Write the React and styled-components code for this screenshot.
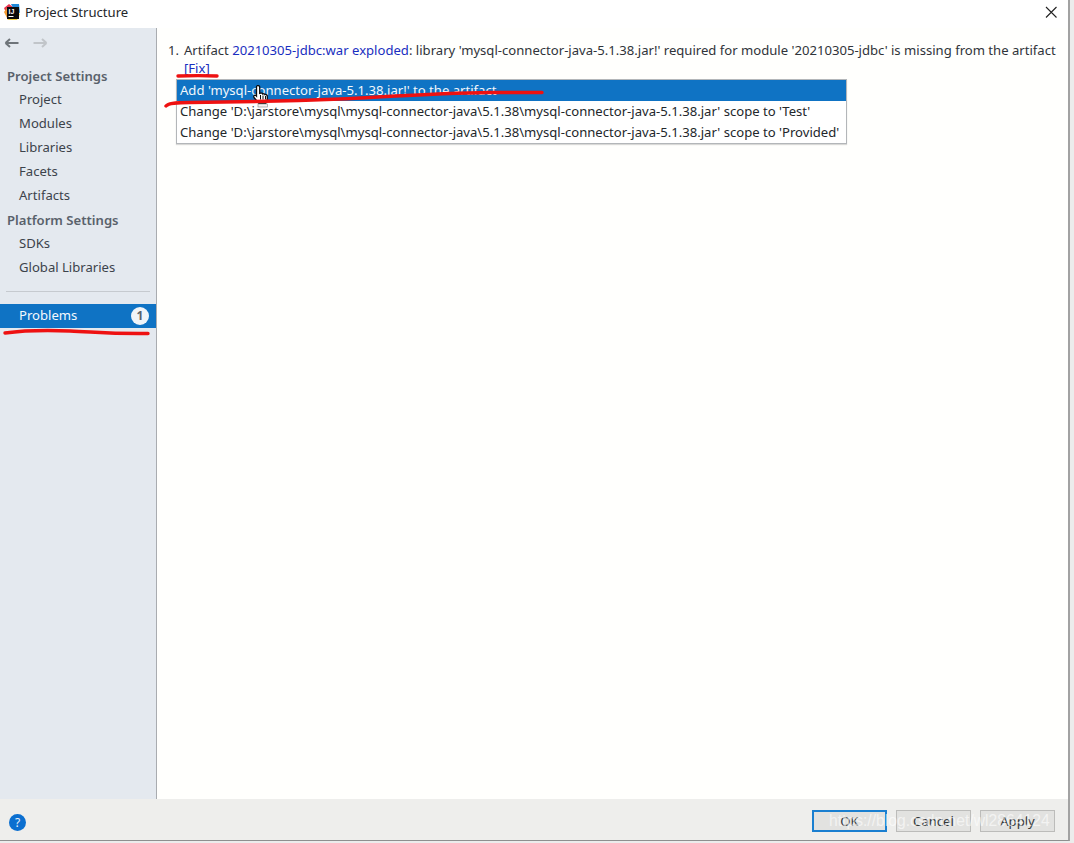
import React from "react";
import styled, { createGlobalStyle } from "styled-components";

const Global = createGlobalStyle`
  html, body { margin: 0; padding: 0; background: #fff; }
  #root { width: 1074px; height: 843px; overflow: hidden; }
  * { box-sizing: border-box; }
`;

const Screen = styled.div`
  position: relative;
  width: 1074px;
  height: 843px;
  background: #ececec;
  padding: 0 4px 2px 0;
  font-family: "Noto Sans", "Open Sans", sans-serif;
  font-size: 13.1px;
  color: #2f3338;
`;
const Dialog = styled.div`
  height: 100%;
  display: flex;
  flex-direction: column;
  background: #fffffd;
  border-right: 2px solid #a2a2a2;
  border-bottom: 1px solid #8f8f8f;
`;
const TitleBar = styled.div`
  height: 28px;
  flex: none;
  display: flex;
  align-items: center;
  padding: 0 0 4px 3px;
  gap: 4px;
  background: #fff;
  color: #24272b;
`;
const CloseButton = styled.div`
  margin-left: auto;
  margin-right: 10px;
  width: 14px;
  height: 14px;
  display: flex;
`;
const Body = styled.div`
  flex: 1;
  display: flex;
  min-height: 0;
`;
const Sidebar = styled.aside`
  width: 157px;
  flex: none;
  background: #e4e9ef;
  border-right: 1px solid #a9acb0;
  display: flex;
  flex-direction: column;
`;
const NavArrows = styled.div`
  height: 30px;
  display: flex;
  align-items: center;
  gap: 12px;
  padding: 0 0 0 4px;
`;
const SectionTitle = styled.div`
  height: 24px;
  margin-top: ${(p) => p.$top || 0}px;
  padding-left: 7px;
  display: flex;
  align-items: center;
  font-weight: 600;
  color: #59616b;
`;
const NavItem = styled.div`
  height: 24px;
  padding: 0 7px 2px 19px;
  display: flex;
  align-items: center;
  justify-content: space-between;
  background: ${(p) => (p.$active ? "#0f73c4" : "transparent")};
  color: ${(p) => (p.$active ? "#f4f9fd" : "#3c434b")};
`;
const Divider = styled.div`
  height: 1px;
  margin: 11px 6px 12px 6px;
  background: #c6cacf;
`;
const CountBadge = styled.span`
  width: 18px;
  height: 18px;
  margin-top: 1px;
  border-radius: 50%;
  background: #f0f4f8;
  color: #59616b;
  font-size: 12px;
  font-weight: 700;
  display: flex;
  align-items: center;
  justify-content: center;
`;
const Content = styled.main`
  flex: 1;
  padding: 12px 0 0 11px;
  position: relative;
  min-width: 0;
`;
const ProblemRow = styled.div`
  display: flex;
  line-height: 20px;
  white-space: nowrap;
  color: #30343a;
`;
const ProblemIndex = styled.span`
  width: 16px;
  flex: none;
`;
const LinkText = styled.span`
  color: #1a2fc0;
`;
const FixLine = styled.div`
  margin: -1px 0 0 16px;
  line-height: 18px;
  color: #1a2fc0;
`;
const Popup = styled.div`
  width: 671px;
  margin: 2px 0 0 8px;
  border: 1px solid #b3b6b9;
  background: #fff;
  box-shadow: 0 1px 1px rgba(0,0,0,.15);
`;
const PopupItem = styled.div`
  height: 21px;
  padding: 0 0 2px 3px;
  display: flex;
  align-items: center;
  white-space: nowrap;
  background: ${(p) => (p.$selected ? "#0f73c4" : "transparent")};
  color: ${(p) => (p.$selected ? "#f2f7fb" : "#23272b")};
`;
const Footer = styled.footer`
  height: 41px;
  flex: none;
  background: #eeeeec;
  display: flex;
  align-items: center;
  padding: 2px 13px 0 9px;
`;
const HelpButton = styled.span`
  width: 17px;
  height: 17px;
  margin-top: 3px;
  margin-right: auto;
  border-radius: 50%;
  background: #0b6fd0;
  color: #e8f2fb;
  font-size: 12px;
  display: flex;
  align-items: center;
  justify-content: center;
`;
const ActionButton = styled.button`
  width: 75px;
  height: 22px;
  margin-left: 9px;
  padding: 0;
  font: inherit;
  color: #34383c;
  background: #e2e2e0;
  border: ${(p) => (p.$primary ? "2px solid #1a7fd0" : "1px solid #bcbcba")};
  display: flex;
  align-items: center;
  justify-content: center;
`;
const Strokes = styled.svg`
  position: absolute;
  left: 0;
  top: 0;
  pointer-events: none;
`;
const PointerIcon = styled.svg`
  position: absolute;
  left: 253px;
  top: 85px;
`;
const Watermark = styled.span`
  position: absolute;
  left: 829px;
  bottom: 13px;
  font-family: "Liberation Sans", sans-serif;
  font-size: 15.7px;
  color: rgba(255,255,255,.6);
  white-space: nowrap;
`;

function Logo() {
  return (
    <svg width="18" height="18" viewBox="0 0 18 18">
      <path d="M1 5 6 1l4 3-6 8z" fill="#e8344e" />
      <path d="M1 9l3-4 4 9-3 3z" fill="#f29a2e" />
      <path d="M8 1h8l1 9-6-3z" fill="#1f88d8" />
      <path d="M5 17l9 0 3-6-6-3z" fill="#f4d03a" />
      <rect x="4" y="4" width="12" height="12" fill="#0b0b0b" />
      <text x="5.500" y="11" fontSize="7" fontWeight="700" fill="#fff" fontFamily="Liberation Sans">IJ</text>
      <rect x="5.500" y="13" width="5" height="1" fill="#fff" />
    </svg>
  );
}

function Arrow({ color, flip }) {
  return (
    <svg width="16" height="12" viewBox="0 0 16 12" style={flip ? { transform: "scaleX(-1)" } : undefined}>
      <path d="M1.500 6h13M1.500 6l4.500-4M1.500 6l4.500 4" fill="none" stroke={color} strokeWidth="2" />
    </svg>
  );
}

function Cursor() {
  return (
    <PointerIcon width="17" height="23" viewBox="0 0 17 23">
      <path d="M3.500 2c0-2 3.200-2 3.200 0v6.500l1-.3c1-.3 1.800 0 2 .8.900-.5 1.900-.2 2.200.6.900-.4 2 .1 2.200 1.100.5 2.300.2 5.200-1.300 7.800H6L1 12.500c-.9-1.300.6-3 2-1.900l.5.500z" fill="#fff" stroke="#0c0c0c" strokeWidth="1.300" />
      <path d="M7.500 10v4.500M10 10.500v4M12.500 11v3.500" stroke="#0c0c0c" strokeWidth="1" />
      <rect x="5" y="19" width="9.500" height="3" fill="#f4f4f4" stroke="#999" strokeWidth=".7" />
    </PointerIcon>
  );
}

export default function App() {
  return (
    <Screen>
      <Global />
      <Dialog>
        <TitleBar>
          <Logo />
          Project Structure
          <CloseButton>
            <svg width="14" height="14" viewBox="0 0 14 14">
              <path d="M2 2l10.500 10.500M12.500 2 2 12.500" stroke="#222" strokeWidth="1.100" />
            </svg>
          </CloseButton>
        </TitleBar>
        <Body>
          <Sidebar>
            <NavArrows>
              <Arrow color="#6e7479" />
              <Arrow color="#c1c5c9" flip />
            </NavArrows>
            <SectionTitle $top={6}>Project Settings</SectionTitle>
            <NavItem>Project</NavItem>
            <NavItem>Modules</NavItem>
            <NavItem>Libraries</NavItem>
            <NavItem>Facets</NavItem>
            <NavItem>Artifacts</NavItem>
            <SectionTitle>Platform Settings</SectionTitle>
            <NavItem>SDKs</NavItem>
            <NavItem>Global Libraries</NavItem>
            <Divider />
            <NavItem $active>
              Problems
              <CountBadge>1</CountBadge>
            </NavItem>
          </Sidebar>
          <Content>
            <ProblemRow>
              <ProblemIndex>1.</ProblemIndex>
              <span>
                Artifact <LinkText>20210305-jdbc:war exploded</LinkText>: library 'mysql-connector-java-5.1.38.jar!' required for module '20210305-jdbc' is missing from the artifact
              </span>
            </ProblemRow>
            <FixLine>[Fix]</FixLine>
            <Popup>
              <PopupItem $selected>Add 'mysql-connector-java-5.1.38.jar!' to the artifact</PopupItem>
              <PopupItem>Change 'D:\jarstore\mysql\mysql-connector-java\5.1.38\mysql-connector-java-5.1.38.jar' scope to 'Test'</PopupItem>
              <PopupItem>Change 'D:\jarstore\mysql\mysql-connector-java\5.1.38\mysql-connector-java-5.1.38.jar' scope to 'Provided'</PopupItem>
            </Popup>
          </Content>
        </Body>
        <Footer>
          <HelpButton>?</HelpButton>
          <ActionButton $primary>OK</ActionButton>
          <ActionButton>Cancel</ActionButton>
          <ActionButton>Apply</ActionButton>
        </Footer>
      </Dialog>
      <Cursor />
      <Strokes width="1074" height="843" viewBox="0 0 1074 843">
        <g fill="none" stroke="#ee1111" strokeWidth="3.400" strokeLinecap="round">
          <path d="M178 76c12-.5 28-.5 39 0" />
          <path d="M166 106c2-2.500 7-3.500 24-3.500 50-.5 100-1.500 150-3.500 50-2.500 100-6 150-6.500 20 0 40 0 52 0" />
          <path d="M5 333c15-2 40-3 65-2 25 1 40 3 78 2.500" />
        </g>
      </Strokes>
      <Watermark>https://blog.csdn.net/wl2864124</Watermark>
    </Screen>
  );
}
